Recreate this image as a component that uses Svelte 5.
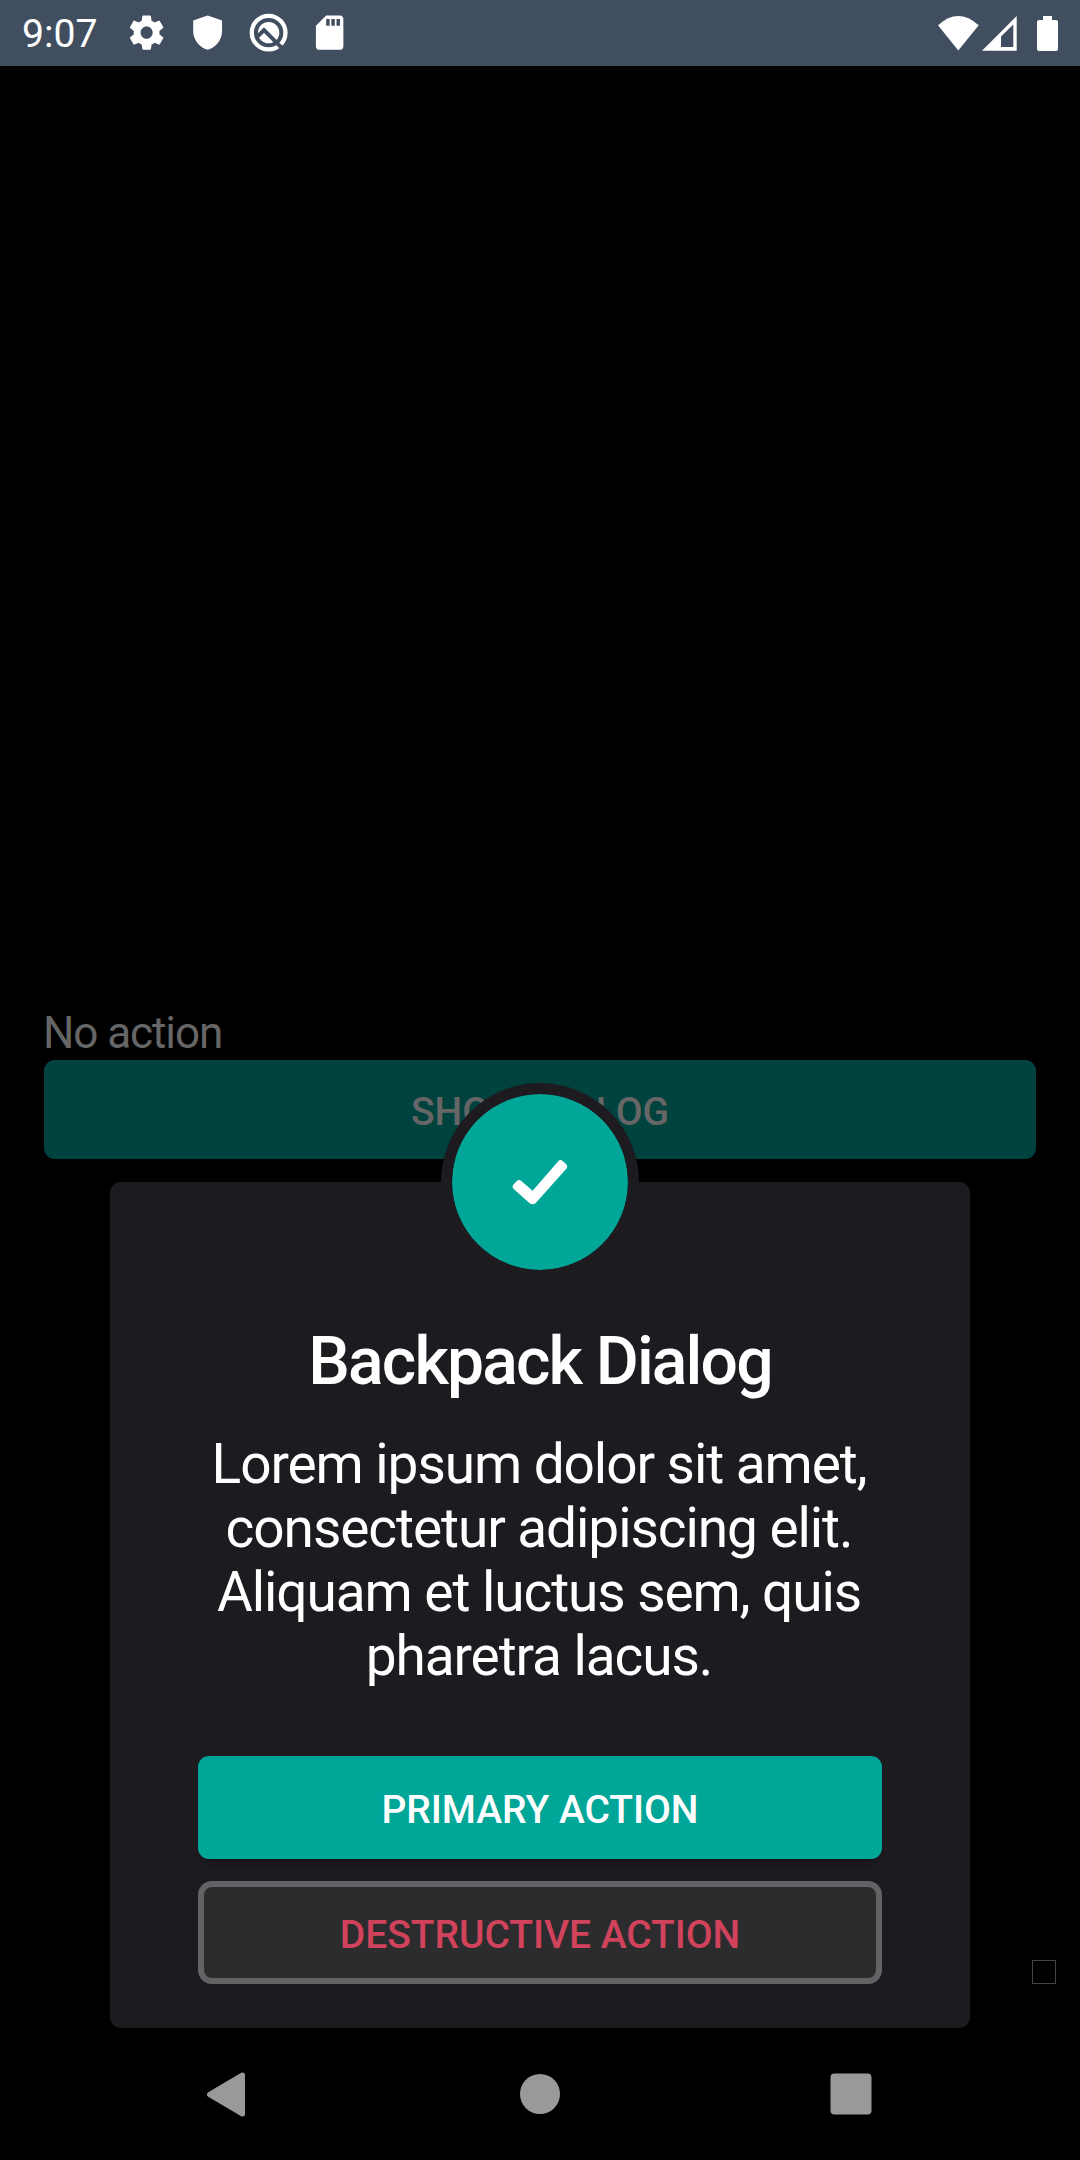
<script>
  let result = $state('No action');
  const message =
    'Lorem ipsum dolor sit amet, consectetur adipiscing elit. Aliquam et luctus sem, quis pharetra lacus.';
</script>

<div class="phone">
  <header class="status">
    <span class="time">9:07</span>
    <div class="notifications">
      <svg viewBox="0 0 24 24"><path d="M19.43 12.98c.04-.32.07-.64.07-.98s-.03-.66-.07-.98l2.11-1.65c.19-.15.24-.42.12-.64l-2-3.46c-.12-.22-.39-.3-.61-.22l-2.49 1c-.52-.4-1.08-.73-1.69-.98l-.38-2.65C14.46 2.18 14.25 2 14 2h-4c-.25 0-.46.18-.49.42l-.38 2.65c-.61.25-1.17.59-1.69.98l-2.49-1c-.23-.09-.49 0-.61.22l-2 3.46c-.13.22-.07.49.12.64l2.11 1.65c-.04.32-.07.65-.07.98s.03.66.07.98l-2.11 1.65c-.19.15-.24.42-.12.64l2 3.46c.12.22.39.3.61.22l2.49-1c.52.4 1.08.73 1.69.98l.38 2.65c.03.24.24.42.49.42h4c.25 0 .46-.18.49-.42l.38-2.65c.61-.25 1.17-.59 1.69-.98l2.49 1c.23.09.49 0 .61-.22l2-3.46c.12-.22.07-.49-.12-.64l-2.11-1.65zM12 15.5c-1.93 0-3.500-1.570-3.500-3.500s1.570-3.500 3.500-3.500 3.500 1.570 3.500 3.500-1.570 3.500-3.500 3.500z" /></svg>
      <svg viewBox="0 0 24 24"><path d="M12 2L3.600 5V11.200C3.600 16.200 7.300 20.800 12 22C16.700 20.800 20.400 16.200 20.400 11.200V5Z" /></svg>
      <svg viewBox="0 0 24 24">
        <circle class="ring" cx="12" cy="12" r="9.800" />
        <circle cx="12" cy="12" r="6.200" />
        <path class="cut" d="M5.500 14.300L9.300 10.500L19.500 20.700" />
      </svg>
      <svg viewBox="0 0 24 24"><path d="M18 2h-8L4.020 8 4 20c0 1.100.9 2 2 2h12c1.100 0 2-.9 2-2V4c0-1.100-.9-2-2-2zm-6 6h-2V4h2v4zm3 0h-2V4h2v4zm3 0h-2V4h2v4z" /></svg>
    </div>
    <svg class="system" viewBox="0 0 122 37">
      <path d="M1 10.300Q21.200-8.300 41.700 10.300L21.300 35.500Z" />
      <path fill-rule="evenodd" d="M45 35.800L79.700 1V35.800ZM64 21.500V32H76.300V9.500Z" />
      <path d="M106 1h9v4h4a2 2 0 0 1 2 2v27a2 2 0 0 1-2 2h-17a2 2 0 0 1-2-2V7a2 2 0 0 1 2-2h4z" />
    </svg>
  </header>

  <main class="page">
    <p class="result">{result}</p>
    <button class="show">SHOW DIALOG</button>
    <span class="corner-box"></span>
  </main>

  <section class="dialog" role="dialog" aria-label="Backpack Dialog">
    <div class="badge">
      <svg viewBox="36 41 168 138"><path d="M41 117L50 107.500Q56 101 63 106.500L98 136L174 48.500Q181 41 188 47L198 56Q205 63 199 70L108 172Q99 181 88 173L42 132Q34 125 41 117Z" /></svg>
    </div>
    <h1>Backpack Dialog</h1>
    <p class="message">{message}</p>
    <div class="actions">
      <button class="primary" onclick={() => (result = 'Primary action')}>PRIMARY ACTION</button>
      <button class="destructive" onclick={() => (result = 'Destructive action')}>DESTRUCTIVE ACTION</button>
    </div>
  </section>

  <nav class="navigation">
    <svg viewBox="0 0 48 48"><path class="back" d="M7.500 24.500L40.500 5V44Z" /></svg>
    <svg viewBox="0 0 48 48"><circle cx="24" cy="24" r="20" /></svg>
    <svg viewBox="0 0 48 48"><rect x="3.500" y="3.500" width="41" height="41" rx="4" /></svg>
  </nav>
</div>

<style>
  :global(body) {
    margin: 0;
    background: #000;
  }
  .phone {
    position: relative;
    display: flex;
    flex-direction: column;
    width: 1080px;
    height: 2160px;
    overflow: hidden;
    background: #000;
    font-family: Roboto, sans-serif;
  }
  p,
  h1 {
    margin: 0;
  }
  svg {
    display: block;
    fill: #fff;
  }
  button {
    display: block;
    width: 100%;
    border: 0;
    border-radius: 11px;
    padding: 4px 0 0;
    font: 500 39px Roboto, sans-serif;
  }

  .status {
    display: flex;
    align-items: center;
    height: 66px;
    box-sizing: border-box;
    padding: 0 21px 0 22px;
    background: #404e60;
  }
  .time {
    width: 104px;
    padding-top: 1px;
    color: #fff;
    font-size: 39.2px;
  }
  .notifications {
    display: flex;
    gap: 19.75px;
  }
  .notifications svg {
    width: 41.25px;
    height: 41.25px;
  }
  .ring {
    fill: none;
    stroke: #fff;
    stroke-width: 2.5;
  }
  .cut {
    fill: none;
    stroke: #404e60;
    stroke-width: 2.3;
  }
  .system {
    width: 122px;
    height: 37px;
    margin-left: auto;
  }

  .page {
    flex: 1;
    padding: 941px 44px 0;
  }
  .result {
    margin: 0 0 1px -1px;
    color: #666;
    font-size: 44px;
    line-height: 52px;
    letter-spacing: -1.07px;
  }
  .show {
    height: 99px;
    color: #666;
    background: #00423d;
  }
  .corner-box {
    display: block;
    box-sizing: border-box;
    width: 24px;
    height: 24px;
    margin: 801px -20px 0 auto;
    border: 1px solid #444;
  }

  .dialog {
    position: absolute;
    top: 1182px;
    left: 110px;
    box-sizing: border-box;
    width: 860px;
    height: 846px;
    padding: 141px 88px 44px;
    border-radius: 11px;
    background: #1d1b20;
    color: #fff;
    text-align: center;
  }
  .badge {
    position: absolute;
    top: -99px;
    left: 331px;
    display: grid;
    place-items: center;
    box-sizing: border-box;
    width: 198px;
    height: 198px;
    border: 11px solid #1d1b20;
    border-radius: 50%;
    background: #00a698;
    background-clip: padding-box;
  }
  .badge svg {
    width: 56px;
    height: 46px;
  }
  h1 {
    font-size: 66px;
    font-weight: 500;
    line-height: 77px;
    letter-spacing: -1.85px;
  }
  .message {
    margin-top: 32px;
    padding-right: 2px;
    font-size: 55px;
    line-height: 64px;
    letter-spacing: -1.08px;
  }
  .actions {
    display: grid;
    gap: 22px;
    margin-top: 68px;
  }
  .actions button {
    height: 103px;
    letter-spacing: -0.06px;
  }
  .primary {
    background: #00a698;
    color: #fff;
    box-shadow: 0 7px 6px -4px rgba(0, 0, 0, 0.35);
  }
  .actions .destructive {
    border: 6px solid #636366;
    border-radius: 14px;
    background: #2c2c2e;
    color: #d1435b;
  }

  .navigation {
    display: grid;
    grid-template-columns: 48px 48px 48px;
    column-gap: 264.5px;
    align-items: center;
    height: 132px;
    box-sizing: border-box;
    padding-left: 202px;
  }
  .navigation svg {
    width: 48px;
    height: 48px;
    fill: #999;
  }
  .navigation svg:nth-child(2) {
    margin-left: 1.5px;
  }
  .navigation svg:nth-child(3) {
    margin-left: -0.5px;
  }
  .back {
    stroke: #999;
    stroke-width: 5;
    stroke-linejoin: round;
  }
</style>
